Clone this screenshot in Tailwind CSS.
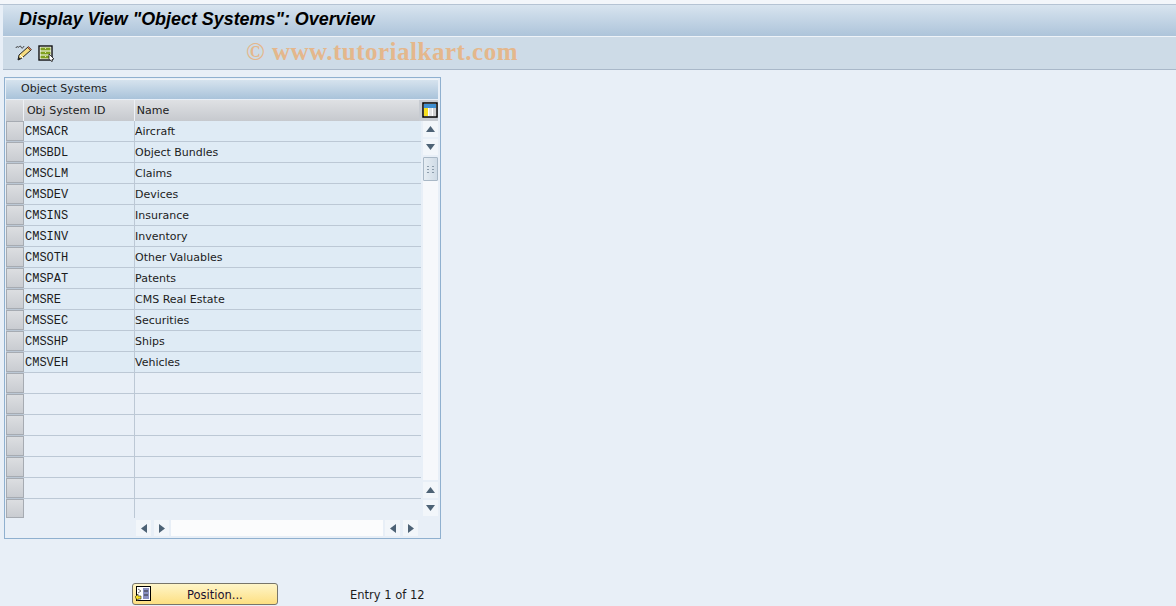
<!DOCTYPE html>
<html><head><meta charset="utf-8"><script src="https://cdn.jsdelivr.net/npm/@tailwindcss/browser@4"></script></head>
<body class="bg-[#e8eff7] overflow-hidden">
<div class="w-[1176px] h-[606px] flex flex-col font-['DejaVu_Sans',sans-serif] text-[11px] text-[#1c1c1c] overflow-hidden">
  <div class="h-[5px] shrink-0 bg-[#f3f6fa] border-b border-[#b5c3d3]"></div>
  <div class="h-[32px] shrink-0 ml-[3px] flex items-center pl-[16px] pb-[2px] bg-gradient-to-b from-[#d8e4ef] to-[#adc4da] border-b border-[#eef3f8]">
    <span class="font-['Liberation_Sans',sans-serif] font-bold italic text-[17.9px] text-black whitespace-nowrap">Display View "Object Systems": Overview</span>
  </div>
  <div class="h-[33px] shrink-0 ml-[3px] flex items-center bg-[#cddbe7] border-b border-[#a9b8c9]">
    <svg class="ml-[12px]" width="18" height="18" viewBox="0 0 18 18"><path d="M1 4c1-3 2 0 3-1s1-2 2 0 2 1 3-1" fill="none" stroke="#333" stroke-width="1"/><path d="M3 16l1-5 9-8 3 3-9 8z" fill="#f6dc80" stroke="#222" stroke-width="1"/><path d="M12.500 3.500l1-1 3 3-1 1z" fill="#e07f50" stroke="#222" stroke-width=".6"/><path d="M5 11l3 3" stroke="#fff" stroke-width="1"/><path d="M3 16l.7-3 2.300 2z" fill="#222"/></svg>
    <svg class="ml-[5px]" width="18" height="17" viewBox="0 0 18 17"><rect x="1" y="1" width="13" height="14" fill="#fff" stroke="#111" stroke-width="1.400"/><rect x="2.500" y="2.500" width="10" height="3" fill="#7f9f20"/><rect x="2.500" y="6.500" width="10" height="3" fill="#7f9f20"/><rect x="2.500" y="10.500" width="10" height="3" fill="#7f9f20"/><path d="M7 3.500h1M7 7.500h1M7 11.500h1" stroke="#dfe8b0"/><path d="M11 9l5 5-2 .5v2.300l-3-3z" fill="#fff" stroke="#222" stroke-width=".8"/></svg>
    <span class="ml-[190px] pb-[2px] font-['Liberation_Serif',serif] font-bold text-[25px] tracking-[0.5px] text-[#e4b78c] whitespace-nowrap">© www.tutorialkart.com</span>
  </div>
  <div class="ml-[4px] mt-[7px] w-[437px] h-[462px] shrink-0 border border-[#8fb0cf] flex flex-col pl-[1px] pr-[2px] pt-[1px]">
    <div class="h-[20px] shrink-0 flex items-center pl-[15px] pb-[1px] bg-gradient-to-b from-[#d6e3ee] to-[#a9c3da] border-t border-[#eef3f8]">Object Systems</div>
    <div class="h-[21px] shrink-0 mt-[1px] flex">
      <div class="w-[18px] bg-gradient-to-b from-[#dfe1e4] to-[#c6c9ce] border-r border-[#eef1f5]"></div>
      <div class="w-[111px] pl-[3px] pt-[1px] flex items-center bg-gradient-to-b from-[#dfe1e4] to-[#c6c9ce] border-r border-[#eef1f5]">Obj System ID</div>
      <div class="w-[285px] pl-[2px] pt-[1px] flex items-center bg-gradient-to-b from-[#dfe1e4] to-[#c6c9ce]">Name</div>
      <div class="w-[19px] pl-[2px] pb-[2px] flex items-center justify-center bg-[#c8ccd2]">
        <svg width="16" height="16" viewBox="0 0 16 16"><rect x="1" y="1" width="14" height="14" fill="#fff" stroke="#000" stroke-width="1.500"/><rect x="2" y="2" width="12" height="4" fill="#3f8fd0"/><rect x="2" y="6" width="4" height="8" fill="#f8e020"/><rect x="7" y="6" width="3" height="8" fill="#e4e4e4"/><rect x="11" y="6" width="3" height="8" fill="#d0d0d0"/></svg>
      </div>
    </div>
    <div class="flex flex-1 min-h-0">
      <div class="w-[415px] shrink-0 flex flex-col">
        <div class="h-[21px] flex border-b border-[#bcc8d5] bg-[#dfebf5]"><div class="w-[18px] bg-gradient-to-b from-[#dcdee1] to-[#c9ccd1] border border-[#a6abb2]"></div><div class="w-[111px] pl-[1px] pt-[2px] flex items-center border-r border-[#bcc8d5] font-['Liberation_Mono',monospace] text-[12px]">CMSACR</div><div class="pt-[2px] flex items-center">Aircraft</div></div>
        <div class="h-[21px] flex border-b border-[#bcc8d5] bg-[#dfebf5]"><div class="w-[18px] bg-gradient-to-b from-[#dcdee1] to-[#c9ccd1] border border-[#a6abb2]"></div><div class="w-[111px] pl-[1px] pt-[2px] flex items-center border-r border-[#bcc8d5] font-['Liberation_Mono',monospace] text-[12px]">CMSBDL</div><div class="pt-[2px] flex items-center">Object Bundles</div></div>
        <div class="h-[21px] flex border-b border-[#bcc8d5] bg-[#dfebf5]"><div class="w-[18px] bg-gradient-to-b from-[#dcdee1] to-[#c9ccd1] border border-[#a6abb2]"></div><div class="w-[111px] pl-[1px] pt-[2px] flex items-center border-r border-[#bcc8d5] font-['Liberation_Mono',monospace] text-[12px]">CMSCLM</div><div class="pt-[2px] flex items-center">Claims</div></div>
        <div class="h-[21px] flex border-b border-[#bcc8d5] bg-[#dfebf5]"><div class="w-[18px] bg-gradient-to-b from-[#dcdee1] to-[#c9ccd1] border border-[#a6abb2]"></div><div class="w-[111px] pl-[1px] pt-[2px] flex items-center border-r border-[#bcc8d5] font-['Liberation_Mono',monospace] text-[12px]">CMSDEV</div><div class="pt-[2px] flex items-center">Devices</div></div>
        <div class="h-[21px] flex border-b border-[#bcc8d5] bg-[#dfebf5]"><div class="w-[18px] bg-gradient-to-b from-[#dcdee1] to-[#c9ccd1] border border-[#a6abb2]"></div><div class="w-[111px] pl-[1px] pt-[2px] flex items-center border-r border-[#bcc8d5] font-['Liberation_Mono',monospace] text-[12px]">CMSINS</div><div class="pt-[2px] flex items-center">Insurance</div></div>
        <div class="h-[21px] flex border-b border-[#bcc8d5] bg-[#dfebf5]"><div class="w-[18px] bg-gradient-to-b from-[#dcdee1] to-[#c9ccd1] border border-[#a6abb2]"></div><div class="w-[111px] pl-[1px] pt-[2px] flex items-center border-r border-[#bcc8d5] font-['Liberation_Mono',monospace] text-[12px]">CMSINV</div><div class="pt-[2px] flex items-center">Inventory</div></div>
        <div class="h-[21px] flex border-b border-[#bcc8d5] bg-[#dfebf5]"><div class="w-[18px] bg-gradient-to-b from-[#dcdee1] to-[#c9ccd1] border border-[#a6abb2]"></div><div class="w-[111px] pl-[1px] pt-[2px] flex items-center border-r border-[#bcc8d5] font-['Liberation_Mono',monospace] text-[12px]">CMSOTH</div><div class="pt-[2px] flex items-center">Other Valuables</div></div>
        <div class="h-[21px] flex border-b border-[#bcc8d5] bg-[#dfebf5]"><div class="w-[18px] bg-gradient-to-b from-[#dcdee1] to-[#c9ccd1] border border-[#a6abb2]"></div><div class="w-[111px] pl-[1px] pt-[2px] flex items-center border-r border-[#bcc8d5] font-['Liberation_Mono',monospace] text-[12px]">CMSPAT</div><div class="pt-[2px] flex items-center">Patents</div></div>
        <div class="h-[21px] flex border-b border-[#bcc8d5] bg-[#dfebf5]"><div class="w-[18px] bg-gradient-to-b from-[#dcdee1] to-[#c9ccd1] border border-[#a6abb2]"></div><div class="w-[111px] pl-[1px] pt-[2px] flex items-center border-r border-[#bcc8d5] font-['Liberation_Mono',monospace] text-[12px]">CMSRE</div><div class="pt-[2px] flex items-center">CMS Real Estate</div></div>
        <div class="h-[21px] flex border-b border-[#bcc8d5] bg-[#dfebf5]"><div class="w-[18px] bg-gradient-to-b from-[#dcdee1] to-[#c9ccd1] border border-[#a6abb2]"></div><div class="w-[111px] pl-[1px] pt-[2px] flex items-center border-r border-[#bcc8d5] font-['Liberation_Mono',monospace] text-[12px]">CMSSEC</div><div class="pt-[2px] flex items-center">Securities</div></div>
        <div class="h-[21px] flex border-b border-[#bcc8d5] bg-[#dfebf5]"><div class="w-[18px] bg-gradient-to-b from-[#dcdee1] to-[#c9ccd1] border border-[#a6abb2]"></div><div class="w-[111px] pl-[1px] pt-[2px] flex items-center border-r border-[#bcc8d5] font-['Liberation_Mono',monospace] text-[12px]">CMSSHP</div><div class="pt-[2px] flex items-center">Ships</div></div>
        <div class="h-[21px] flex border-b border-[#bcc8d5] bg-[#dfebf5]"><div class="w-[18px] bg-gradient-to-b from-[#dcdee1] to-[#c9ccd1] border border-[#a6abb2]"></div><div class="w-[111px] pl-[1px] pt-[2px] flex items-center border-r border-[#bcc8d5] font-['Liberation_Mono',monospace] text-[12px]">CMSVEH</div><div class="pt-[2px] flex items-center">Vehicles</div></div>
        <div class="h-[21px] flex border-b border-[#bcc8d5]"><div class="w-[18px] bg-gradient-to-b from-[#dcdee1] to-[#c9ccd1] border border-[#a6abb2]"></div><div class="w-[111px] border-r border-[#bcc8d5]"></div></div>
        <div class="h-[21px] flex border-b border-[#bcc8d5]"><div class="w-[18px] bg-gradient-to-b from-[#dcdee1] to-[#c9ccd1] border border-[#a6abb2]"></div><div class="w-[111px] border-r border-[#bcc8d5]"></div></div>
        <div class="h-[21px] flex border-b border-[#bcc8d5]"><div class="w-[18px] bg-gradient-to-b from-[#dcdee1] to-[#c9ccd1] border border-[#a6abb2]"></div><div class="w-[111px] border-r border-[#bcc8d5]"></div></div>
        <div class="h-[21px] flex border-b border-[#bcc8d5]"><div class="w-[18px] bg-gradient-to-b from-[#dcdee1] to-[#c9ccd1] border border-[#a6abb2]"></div><div class="w-[111px] border-r border-[#bcc8d5]"></div></div>
        <div class="h-[21px] flex border-b border-[#bcc8d5]"><div class="w-[18px] bg-gradient-to-b from-[#dcdee1] to-[#c9ccd1] border border-[#a6abb2]"></div><div class="w-[111px] border-r border-[#bcc8d5]"></div></div>
        <div class="h-[21px] flex border-b border-[#bcc8d5]"><div class="w-[18px] bg-gradient-to-b from-[#dcdee1] to-[#c9ccd1] border border-[#a6abb2]"></div><div class="w-[111px] border-r border-[#bcc8d5]"></div></div>
        <div class="h-[19px] flex"><div class="w-[18px] bg-gradient-to-b from-[#dcdee1] to-[#c9ccd1] border border-[#a6abb2]"></div><div class="w-[111px] border-r border-[#bcc8d5]"></div></div>
        <div class="h-[16px] mt-[2px] flex pl-[130px]">
          <div class="w-[15px] bg-[#f2f6fa] flex items-center justify-center"><svg width="6" height="9" viewBox="0 0 6 9"><path d="M6 0v9L0 4.500z" fill="#4d6275"/></svg></div>
          <div class="w-[15px] ml-[3px] bg-[#f2f6fa] flex items-center justify-center"><svg width="6" height="9" viewBox="0 0 6 9"><path d="M0 0v9l6-4.500z" fill="#4d6275"/></svg></div>
          <div class="w-[212px] ml-[2px] bg-[#fbfcfd]"></div>
          <div class="w-[15px] ml-[2px] bg-[#f2f6fa] flex items-center justify-center"><svg width="6" height="9" viewBox="0 0 6 9"><path d="M6 0v9L0 4.500z" fill="#4d6275"/></svg></div>
          <div class="w-[15px] ml-[3px] bg-[#f2f6fa] flex items-center justify-center"><svg width="6" height="9" viewBox="0 0 6 9"><path d="M0 0v9l6-4.500z" fill="#4d6275"/></svg></div>
        </div>
      </div>
      <div class="w-[15px] ml-[2px] h-[395px] flex flex-col">
        <div class="h-[16px] bg-[#f2f6fa] flex items-center justify-center"><svg width="9" height="6" viewBox="0 0 9 6"><path d="M0 6h9L4.500 0z" fill="#4d6275"/></svg></div>
        <div class="h-[16px] mt-[2px] bg-[#f2f6fa] flex items-center justify-center"><svg width="9" height="6" viewBox="0 0 9 6"><path d="M0 0h9L4.500 6z" fill="#4d6275"/></svg></div>
        <div class="h-[24px] mt-[2px] bg-gradient-to-r from-[#e6edf3] to-[#cfdbe6] border border-[#a9b8c6] rounded-[1px] flex items-center justify-center"><svg width="7" height="9" viewBox="0 0 7 9"><path d="M0 1h2v1H0zM5 1h2v1H5zM0 4h2v1H0zM5 4h2v1H5zM0 7h2v1H0zM5 7h2v1H5z" fill="#8c9cab"/></svg></div>
        <div class="flex-1 bg-[#f6f8fb]"></div>
        <div class="h-[16px] mt-[2px] bg-[#f2f6fa] flex items-center justify-center"><svg width="9" height="6" viewBox="0 0 9 6"><path d="M0 6h9L4.500 0z" fill="#4d6275"/></svg></div>
        <div class="h-[16px] mt-[2px] bg-[#f2f6fa] flex items-center justify-center"><svg width="9" height="6" viewBox="0 0 9 6"><path d="M0 0h9L4.500 6z" fill="#4d6275"/></svg></div>
      </div>
    </div>
  </div>
  <div class="ml-[132px] mt-[44px] flex items-center h-[22px] shrink-0 text-[11.5px]">
    <div class="w-[146px] h-[22px] rounded-[3px] border border-[#77756a] bg-gradient-to-b from-[#fef5c8] to-[#fddf80] flex items-center pl-[2px] text-[#1c1030]">
      <svg width="16" height="16" viewBox="0 0 16 16"><rect x="1.500" y=".5" width="14" height="14" fill="#fff" stroke="#000"/><rect x="8" y="2" width="6" height="11" fill="#8a8fc0"/><path d="M9 5h4M9 9h4" stroke="#333"/><path d="M3 3l3 2-3 2" fill="none" stroke="#777"/><path d="M0 11l3-3v2h3v3H3v2z" fill="#f8e020" stroke="#222" stroke-width=".6"/></svg>
      <span class="ml-[36px] pt-[3px]">Position...</span>
    </div>
    <span class="ml-[72px] pt-[3px] whitespace-nowrap">Entry 1 of 12</span>
  </div>
</div>
</body></html>
